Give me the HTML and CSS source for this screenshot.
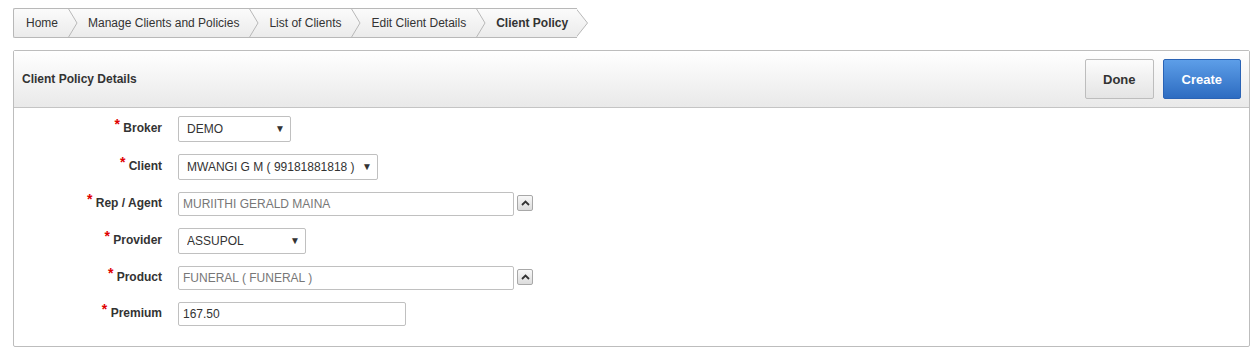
FILE: index.html
```html
<!DOCTYPE html>
<html>
<head>
<meta charset="utf-8">
<title>Client Policy</title>
<link rel="stylesheet" href="styles.css">
</head>
<body>
<div class="crumbs">
  <ul class="crumbList">
    <li class="crumb first">Home</li>
    <li class="crumbSep"><svg width="10" height="28" viewBox="0 0 10 28"><polyline points="0,-1 9,14 0,29" fill="none" stroke="#b8b8b8" stroke-width="1"/></svg></li>
    <li class="crumb">Manage Clients and Policies</li>
    <li class="crumbSep"><svg width="10" height="28" viewBox="0 0 10 28"><polyline points="0,-1 9,14 0,29" fill="none" stroke="#b8b8b8" stroke-width="1"/></svg></li>
    <li class="crumb">List of Clients</li>
    <li class="crumbSep"><svg width="10" height="28" viewBox="0 0 10 28"><polyline points="0,-1 9,14 0,29" fill="none" stroke="#b8b8b8" stroke-width="1"/></svg></li>
    <li class="crumb">Edit Client Details</li>
    <li class="crumbSep"><svg width="10" height="28" viewBox="0 0 10 28"><polyline points="0,-1 9,14 0,29" fill="none" stroke="#b8b8b8" stroke-width="1"/></svg></li>
    <li class="crumb current">Client Policy</li>
  </ul>
  <svg class="crumbTip" width="12" height="30" viewBox="0 0 12 30">
    <defs>
      <linearGradient id="tipGrad" x1="0" y1="0" x2="0" y2="1">
        <stop offset="0" stop-color="#fbfbfb"/>
        <stop offset="1" stop-color="#ebebeb"/>
      </linearGradient>
    </defs>
    <polygon points="-1,0.5 10.5,15 -1,29.5" fill="url(#tipGrad)"/>
    <polyline points="-1,0.5 10.5,15 -1,29.5" fill="none" stroke="#b8b8b8" stroke-width="1"/>
  </svg>
</div>

<div class="region">
  <div class="regionHeader">
    <h2 class="regionTitle">Client Policy Details</h2>
    <div class="regionButtons">
      <button type="button" class="btn">Done</button>
      <button type="button" class="btn hot">Create</button>
    </div>
  </div>
  <div class="regionBody">
    <form class="policyForm">
      <label class="fieldLabel"><span class="req">*</span> Broker</label>
      <div class="field">
        <span class="selectWrap"><select class="sel selBroker"><option>DEMO</option></select></span>
      </div>

      <label class="fieldLabel"><span class="req">*</span> Client</label>
      <div class="field">
        <span class="selectWrap"><select class="sel selClient"><option>MWANGI G M ( 99181881818 )</option></select></span>
      </div>

      <label class="fieldLabel"><span class="req">*</span> Rep / Agent</label>
      <div class="field">
        <input class="txt txtWide readonly" type="text" value="MURIITHI GERALD MAINA" readonly>
        <span class="popBtn"><svg width="9" height="6" viewBox="0 0 9 6"><polyline points="1,5 4.5,1.5 8,5" fill="none" stroke="#333" stroke-width="1.8"/></svg></span>
      </div>

      <label class="fieldLabel"><span class="req">*</span> Provider</label>
      <div class="field">
        <span class="selectWrap"><select class="sel selProvider"><option>ASSUPOL</option></select></span>
      </div>

      <label class="fieldLabel"><span class="req">*</span> Product</label>
      <div class="field">
        <input class="txt txtWide readonly" type="text" value="FUNERAL ( FUNERAL )" readonly>
        <span class="popBtn"><svg width="9" height="6" viewBox="0 0 9 6"><polyline points="1,5 4.5,1.5 8,5" fill="none" stroke="#333" stroke-width="1.8"/></svg></span>
      </div>

      <label class="fieldLabel"><span class="req">*</span> Premium</label>
      <div class="field">
        <input class="txt txtShort" type="text" value="167.50">
      </div>
    </form>
  </div>
</div>
</body>
</html>
```

FILE: styles.css
```css
body {
  margin: 0;
  padding: 8px 9px 0 13px;
  font-family: "Liberation Sans", Arial, sans-serif;
  font-size: 12px;
  color: #333;
  background-color: white;
}
.crumbs {
  display: flex;
  height: 30px;
  margin-bottom: 12px;
}
.crumbList {
  display: flex;
  margin: 0;
  padding: 0;
  list-style-type: none;
  height: 28px;
  border: 1px solid #b8b8b8;
  border-right: none;
  border-radius: 2px 0 0 2px;
  background: linear-gradient(#fbfbfb, #ebebeb);
}
.crumb {
  line-height: 28px;
  padding: 0 10px;
  white-space: nowrap;
}
.crumb.first {
  padding-left: 12px;
}
.crumb.current {
  font-weight: bold;
  padding-right: 9px;
}
.crumbSep {
  width: 10px;
  height: 28px;
}
.crumbSep svg {
  display: block;
}
.crumbTip {
  display: block;
}
.region {
  border: 1px solid #bdbdbd;
  border-radius: 2px;
  background: white;
}
.regionHeader {
  display: flex;
  align-items: center;
  justify-content: space-between;
  height: 56px;
  padding: 0 8px;
  background: linear-gradient(#ffffff, #e9e9e9);
  border-bottom: 1px solid #c4c4c4;
}
.regionTitle {
  margin: 0;
  font-size: 12px;
  font-weight: bold;
  color: #333;
}
.regionButtons {
  display: flex;
  gap: 9px;
}
.btn {
  height: 40px;
  padding: 0 17px;
  font-family: "Liberation Sans", Arial, sans-serif;
  font-size: 13px;
  font-weight: bold;
  color: #333;
  border: 1px solid #bdbdbd;
  border-radius: 2px;
  background: linear-gradient(#fcfcfc, #e4e4e4);
}
.btn.hot {
  color: white;
  border-color: #2a63b5;
  background: linear-gradient(#5d9ee8, #2d6cc1);
  padding: 0 18px;
}
.regionBody {
  padding: 8px 0 20px 0;
}
.policyForm {
  display: grid;
  grid-template-columns: 148px auto;
  column-gap: 16px;
  row-gap: 12px;
  align-items: center;
}
.fieldLabel {
  text-align: right;
  font-weight: bold;
  color: #333;
  line-height: 16px;
  margin-top: -3px;
}
.req {
  color: #e00000;
  font-size: 14px;
  position: relative;
  top: -3px;
}
.field {
  display: flex;
  align-items: center;
}
.selectWrap {
  position: relative;
  display: inline-block;
}
.selectWrap::after {
  content: "\25BC";
  position: absolute;
  right: 6px;
  top: 7px;
  font-size: 10px;
  color: #333;
  pointer-events: none;
}
.sel {
  appearance: none;
  -webkit-appearance: none;
  height: 26px;
  padding: 0 8px;
  font-family: "Liberation Sans", Arial, sans-serif;
  font-size: 12px;
  color: #333;
  background: white;
  border: 1px solid #c0c0c0;
  border-radius: 2px;
}
.selBroker {
  width: 113px;
}
.selClient {
  width: 200px;
}
.selProvider {
  width: 128px;
}
.txt {
  box-sizing: border-box;
  height: 24px;
  padding: 0 4px;
  font-family: "Liberation Sans", Arial, sans-serif;
  font-size: 12px;
  color: #333;
  border: 1px solid #c0c0c0;
  border-radius: 2px;
  background: white;
}
.txt.readonly {
  color: #777;
}
.txtWide {
  width: 336px;
}
.txtShort {
  width: 228px;
}
.popBtn {
  box-sizing: border-box;
  display: flex;
  align-items: center;
  justify-content: center;
  width: 16px;
  height: 16px;
  margin: -3px 0 0 3px;
  border: 1px solid #a8a8a8;
  border-radius: 2px;
  background: linear-gradient(#f8f8f8, #dcdcdc);
}
```
